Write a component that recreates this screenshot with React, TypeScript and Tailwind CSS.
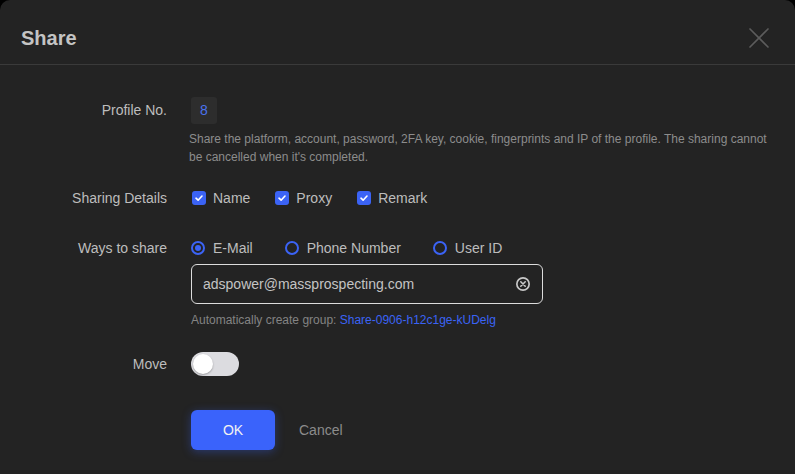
import { X } from 'lucide-react';

function Check({ label }: { label: string }) {
    return (
        <label className="flex items-center gap-[7px]">
            <span className="flex h-[14px] w-[14px] items-center justify-center rounded-[3px] bg-[#3b63f5]">
                <svg width="10" height="10" viewBox="0 0 10 10">
                    <path d="M2 5.2 L4.1 7.2 L8 3" fill="none" stroke="#fff" strokeWidth="1.6" strokeLinecap="round" strokeLinejoin="round" />
                </svg>
            </span>
            <span>{label}</span>
        </label>
    );
}

function Radio({ label, checked }: { label: string; checked?: boolean }) {
    return (
        <label className="flex items-center gap-[8px]">
            <span className="flex h-[14px] w-[14px] items-center justify-center rounded-full border-2 border-[#3b63f5]">
                {checked && <span className="h-[6px] w-[6px] rounded-full bg-[#3b63f5]" />}
            </span>
            <span>{label}</span>
        </label>
    );
}

export default function App() {
    return (
        <div className="h-[474px] w-[795px] overflow-hidden bg-black font-['Liberation_Sans',Arial,sans-serif]">
            <div className="h-[490px] rounded-[10px] bg-[#232323]">
                <div className="flex h-[65px] items-center justify-between border-b border-[#3a3a3a] pl-[21px] pr-[18px] pt-[12px]">
                    <h1 className="text-[20px] font-bold text-[#c4c4c4]">Share</h1>
                    <X size={36} strokeWidth={1.1} className="text-[#5c5c5c]" />
                </div>

                <div className="grid grid-cols-[167px_1fr] gap-x-[24px] pr-[26px] pt-[32px] text-[14px] text-[#bdbdbd]">
                    <div className="flex h-[27px] items-center justify-end">Profile No.</div>
                    <div>
                        <span className="flex h-[27px] w-[26px] items-center justify-center rounded-[3px] bg-[#2d2d2d] text-[#4a72ee]">8</span>
                    </div>
                    <div />
                    <p className="ml-[-2px] mt-[6px] text-[12px] leading-[18px] text-[#8c8c8c]">
                        Share the platform, account, password, 2FA key, cookie, fingerprints and IP of the profile. The sharing cannot be cancelled when it's completed.
                    </p>

                    <div className="mt-[22px] flex h-[20px] items-center justify-end">Sharing Details</div>
                    <div className="mt-[22px] flex h-[20px] items-center gap-[25px] pl-[1px]">
                        <Check label="Name" />
                        <Check label="Proxy" />
                        <Check label="Remark" />
                    </div>

                    <div className="mt-[30px] flex h-[20px] items-center justify-end">Ways to share</div>
                    <div className="mt-[30px] flex h-[20px] items-center gap-[32px]">
                        <Radio label="E-Mail" checked />
                        <Radio label="Phone Number" />
                        <Radio label="User ID" />
                    </div>
                    <div />
                    <div>
                        <div className="mt-[6px] flex h-[40px] w-[352px] items-center justify-between rounded-[6px] border border-[#dcdcdc] pl-[11px] pr-[11px] text-[#c4c4c4]">
                            <span>adspower@massprospecting.com</span>
                            <svg width="16" height="16" viewBox="0 0 16 16">
                                <circle cx="8" cy="8" r="7" fill="#c8c8c8" />
                                <circle cx="8" cy="8" r="5.3" fill="#232323" />
                                <path d="M5.8 5.8 L10.2 10.2 M10.2 5.8 L5.8 10.2" stroke="#c8c8c8" strokeWidth="1.6" strokeLinecap="round" />
                            </svg>
                        </div>
                        <p className="mt-[7px] text-[12px] leading-[18px] text-[#848484]">
                            Automatically create group: <span className="text-[#3b63f5]">Share-0906-h12c1ge-kUDelg</span>
                        </p>
                    </div>

                    <div className="mt-[23px] flex h-[24px] items-center justify-end">Move</div>
                    <div className="mt-[23px]">
                        <span className="flex h-[24px] w-[48px] items-center rounded-full bg-[#dcdce0] px-[2px]">
                            <span className="h-[20px] w-[20px] rounded-full bg-white shadow-[0_1px_2px_rgba(0,0,0,0.3)]" />
                        </span>
                    </div>

                    <div />
                    <div className="mt-[34px] flex items-center gap-[24px]">
                        <button className="h-[40px] w-[84px] rounded-[6px] bg-[#3a63fb] text-[#f2f2f2] shadow-[0_2px_10px_rgba(58,99,251,0.35)]">OK</button>
                        <button className="text-[#8c8c8c]">Cancel</button>
                    </div>
                </div>
            </div>
        </div>
    );
}
